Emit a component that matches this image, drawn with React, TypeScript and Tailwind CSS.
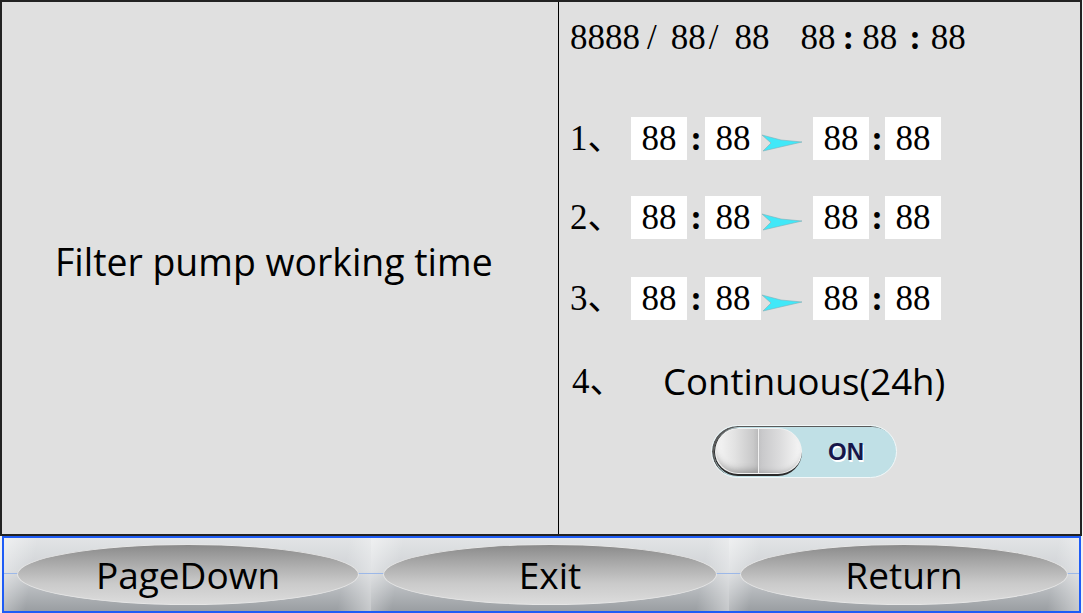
import React from 'react';

// Filter pump schedule screen (HMI style)

const serif = "font-['Liberation_Serif','Noto_Sans_CJK_SC',serif]";
const sans = "font-['Open_Sans','Noto_Sans',sans-serif]";

function TimeBox({ value }: { value: string }) {
  return (
    <div className={`w-[56px] h-[43px] bg-white flex items-center justify-center text-[35px] leading-none text-black ${serif}`}>
      {value}
    </div>
  );
}

function Colon({ w }: { w: string }) {
  return (
    <div className={`${w} text-center text-[35px] leading-none font-bold text-black ${serif}`}>:</div>
  );
}

function Arrow() {
  return (
    <div className="w-[52px] h-[43px] shrink-0">
      <svg width="52" height="43" viewBox="0 0 52 43">
        <path d="M1 18 L20 23 L41 25 L2 34 L10 26 Z" fill="#40e8f8" stroke="#7fb0b8" strokeWidth="0.6" />
      </svg>
    </div>
  );
}

function ScheduleRow({ label, className }: { label: string; className?: string }) {
  return (
    <div className={`flex items-center ${className ?? ''}`}>
      <div className={`w-[61px] shrink-0 text-[35px] leading-none text-black ${serif}`}>{label}</div>
      <TimeBox value="88" />
      <Colon w="w-[18px]" />
      <TimeBox value="88" />
      <Arrow />
      <TimeBox value="88" />
      <Colon w="w-[16px]" />
      <TimeBox value="88" />
    </div>
  );
}

function Toggle() {
  return (
    <div className="w-[186px] h-[53px] rounded-full bg-[#c0e0e6] border border-[#f2f8f9] shadow-[inset_2px_1px_0_#5a5a5a] flex items-center pl-[2px]">
      <div className="w-[88px] h-[48px] rounded-full border-b-2 border-l border-[#2a2a2a] bg-[#f2f2f2] flex gap-[1px] overflow-hidden p-[1px]">
        <div className="flex-1 rounded-l-full rounded-r-[14px] bg-[linear-gradient(90deg,#f6f6f6_0%,#e2e2e2_45%,#c2c2c3_100%)] shadow-[inset_0_-6px_6px_-3px_rgba(90,90,90,0.45)]" />
        <div className="flex-1 rounded-r-full rounded-l-[14px] bg-[linear-gradient(90deg,#c6c6c8_0%,#dcdcdd_50%,#f6f6f6_100%)] shadow-[inset_0_-4px_5px_-3px_rgba(90,90,90,0.35)]" />
      </div>
      <div className="flex-1 flex justify-center pr-[6px]">
        <span className="text-[24px] leading-none font-bold text-[#16164a] font-['Liberation_Sans',Arial,sans-serif] [text-shadow:1px_2px_0_#ffffff]">
          ON
        </span>
      </div>
    </div>
  );
}

function BarButton({ label, className }: { label: string; className: string }) {
  return (
    <div
      className={`relative h-full py-[6px] bg-[linear-gradient(180deg,transparent_35px,#9cb8e8_35px,#9cb8e8_36px,transparent_36px),linear-gradient(100deg,rgba(255,255,255,0.45)_0%,rgba(255,255,255,0)_9%,rgba(255,255,255,0)_91%,rgba(255,255,255,0.45)_100%),linear-gradient(180deg,#e2e4e6_0%,#cfd2d5_45%,#9a9ea2_100%)] ${className}`}
    >
      <div className="h-full rounded-[50%] border border-[#e6e6e6] bg-[linear-gradient(180deg,#8a8a8a_0%,#a9a9a9_30%,#cacaca_65%,#dcdcdc_100%)] flex items-center justify-center">
        <span className={`text-[37px] leading-none text-black ${sans}`}>{label}</span>
      </div>
    </div>
  );
}

export default function App() {
  return (
    <div className="w-[1083px] h-[613px] bg-[#f2f2f2] overflow-hidden">
      {/* Main frame */}
      <div className="w-[1082px] h-[536px] border-2 border-[#222222] bg-[#e0e0e0] flex">
        <div className="w-[557px] border-r border-black flex items-center pl-[53px] pb-[13px]">
          <span className={`text-[37.4px] leading-none text-black ${sans}`}>Filter pump working time</span>
        </div>

        <div className="flex-1 pl-[11px] pt-[18px]">
          <div className={`flex items-baseline text-[35px] leading-none text-black ${serif}`}>
            <span>8888</span>
            <span className="ml-[7px]">/</span>
            <span className="ml-[14px]">88</span>
            <span className="ml-[3px]">/</span>
            <span className="ml-[16px]">88</span>
            <span className="ml-[31px]">88</span>
            <span className="ml-[7px] font-bold">:</span>
            <span className="ml-[8px]">88</span>
            <span className="ml-[12px] font-bold">:</span>
            <span className="ml-[10px]">88</span>
          </div>

          <ScheduleRow label="1、" className="mt-[62px]" />
          <ScheduleRow label="2、" className="mt-[36px]" />
          <ScheduleRow label="3、" className="mt-[38px]" />

          <div className="flex items-center h-[43px] mt-[40px]">
            <div className={`w-[61px] shrink-0 pl-[2px] text-[35px] leading-none text-black ${serif}`}>4、</div>
            <span className={`ml-[32px] text-[36.6px] leading-none text-black ${sans}`}>Continuous(24h)</span>
          </div>

          <div className="mt-[22px] ml-[141px]">
            <Toggle />
          </div>
        </div>
      </div>

      {/* Bottom button bar */}
      <div className="ml-[2px] w-[1079px] h-[77px] border-2 border-[#1e5cf6] flex">
        <BarButton label="PageDown" className="w-[367px] pl-[13px] pr-[12px]" />
        <BarButton label="Exit" className="w-[358px] pl-[12px] pr-[12px]" />
        <BarButton label="Return" className="flex-1 pl-[11px] pr-[11px]" />
      </div>
    </div>
  );
}
